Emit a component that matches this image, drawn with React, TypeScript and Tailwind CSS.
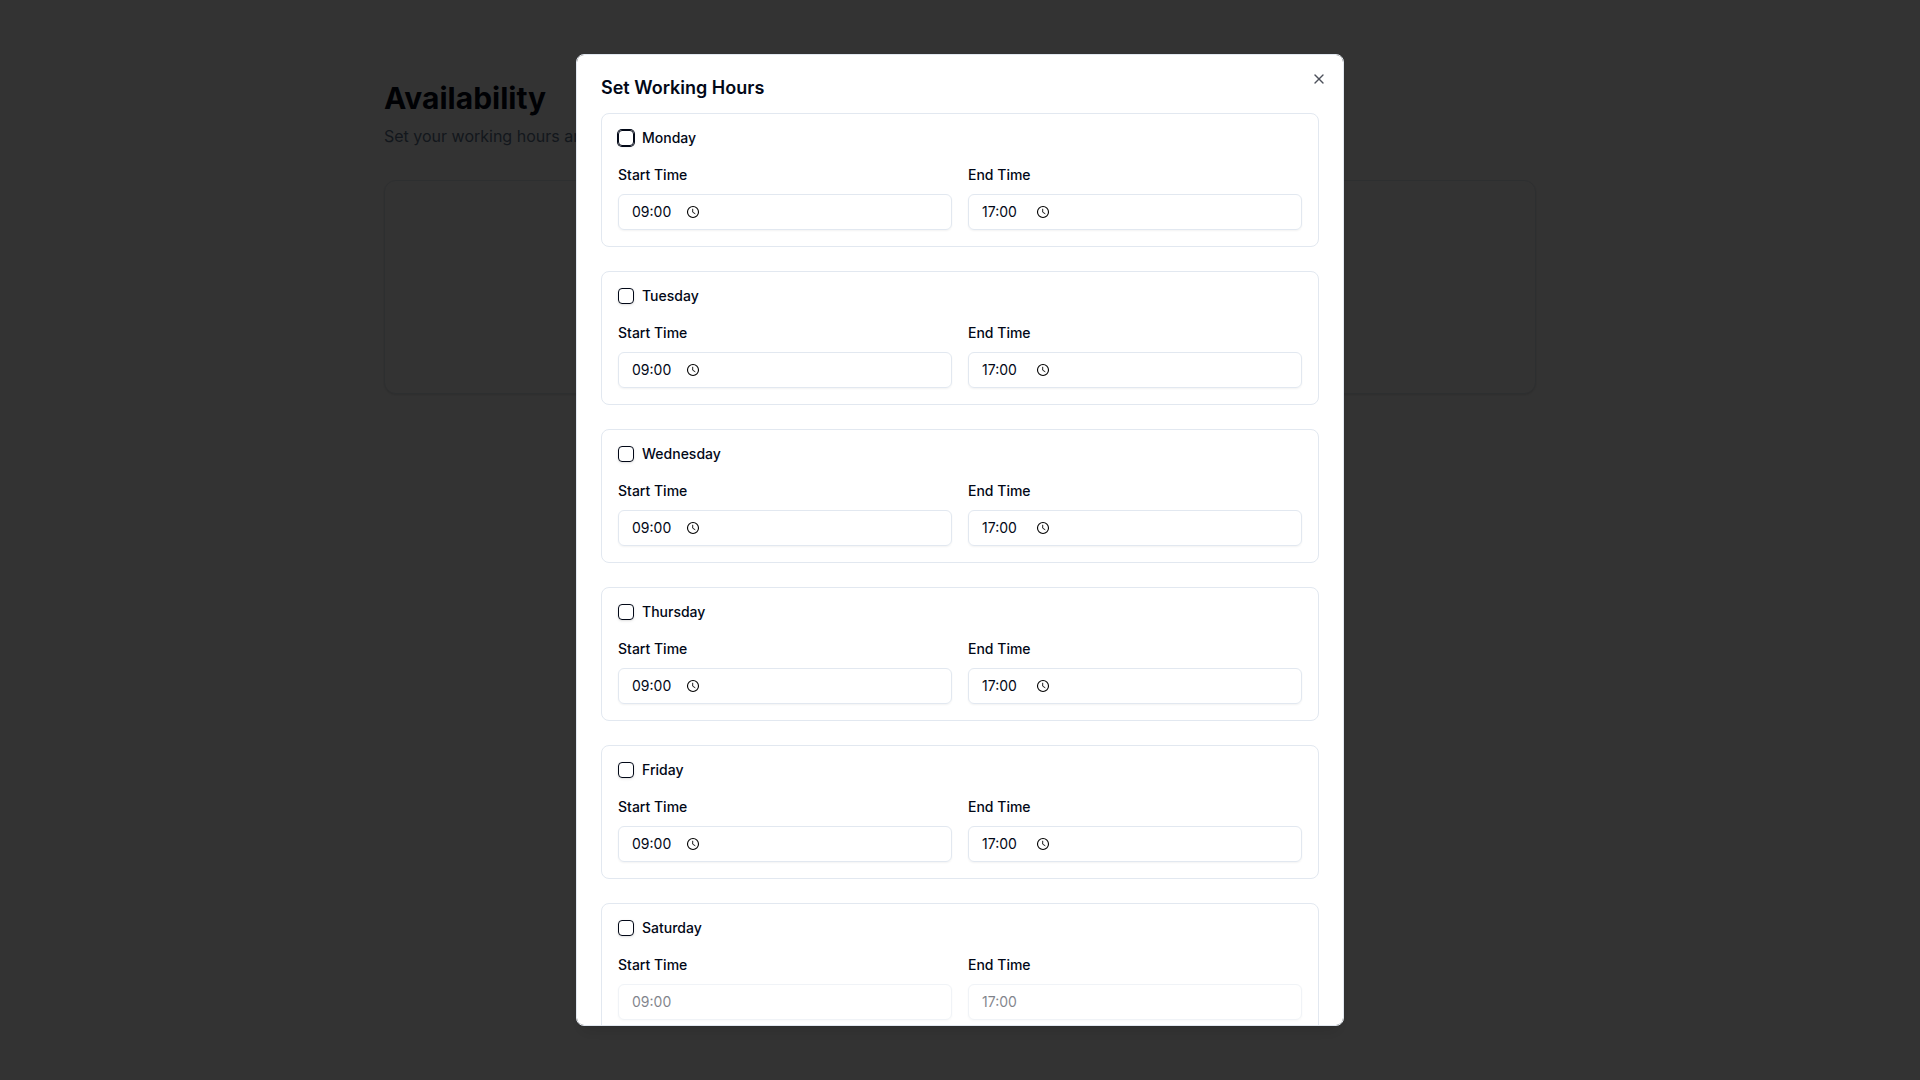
import { useState } from "react";
import { X } from "lucide-react";

type Day = { name: string; locked: boolean };

const days: Day[] = [
  { name: "Monday", locked: false },
  { name: "Tuesday", locked: false },
  { name: "Wednesday", locked: false },
  { name: "Thursday", locked: false },
  { name: "Friday", locked: false },
  { name: "Saturday", locked: true },
];

function ClockIcon() {
  return (
    <svg viewBox="0 0 14 14" className="size-3.5" fill="none" stroke="currentColor" aria-hidden="true">
      <circle cx="7" cy="7" r="5.5" strokeWidth="1.1" />
      <path d="M6.7 3.8V7.2L9.3 8.8" strokeWidth="0.9" />
    </svg>
  );
}

function TimeField({ id, label, initial, disabled }: { id: string; label: string; initial: string; disabled: boolean }) {
  const [value, setValue] = useState(initial);
  return (
    <div className="flex flex-col gap-2">
      <div>
        <label htmlFor={id} className="text-sm leading-none font-medium">
          {label}
        </label>
      </div>
      <div
        className={`flex h-9 items-center rounded-md border border-slate-200 px-3 text-sm shadow-xs ${disabled ? "opacity-50" : ""}`}
      >
        <input
          id={id}
          type="text"
          inputMode="numeric"
          value={value}
          onChange={(e) => setValue(e.target.value)}
          disabled={disabled}
          className="w-[55px] bg-transparent pl-px outline-none"
        />
        {!disabled && (
          <button type="button" aria-label={`Pick ${label.toLowerCase()}`} className="text-black">
            <ClockIcon />
          </button>
        )}
      </div>
    </div>
  );
}

function DayCard({ day, focused }: { day: Day; focused: boolean }) {
  const id = day.name.toLowerCase();
  return (
    <section className="flex flex-col gap-4 rounded-lg border border-slate-200 p-4">
      <div className="flex items-center gap-2">
        <input
          id={id}
          type="checkbox"
          autoFocus={focused}
          className="size-4 shrink-0 appearance-none rounded-sm border border-[#020817] shadow-sm outline-none checked:bg-slate-900 focus:ring-1 focus:ring-[#020817]"
        />
        <label htmlFor={id} className="text-sm leading-4 font-medium">
          {day.name}
        </label>
      </div>
      <div className="grid grid-cols-2 gap-4">
        <TimeField id={`${id}-start`} label="Start Time" initial="09:00" disabled={day.locked} />
        <TimeField id={`${id}-end`} label="End Time" initial="17:00" disabled={day.locked} />
      </div>
    </section>
  );
}

export default function App() {
  return (
    <div className="min-h-screen bg-white font-['Inter',sans-serif] text-[#020817]">
      <main className="mx-auto max-w-6xl pt-20">
        <h1 className="text-3xl font-bold">Availability</h1>
        <p className="mt-2 text-base text-slate-500">Set your working hours and availability</p>
        <div className="mt-8 h-[214px] rounded-xl border border-slate-200 bg-white shadow-sm" />
      </main>

      <div className="fixed inset-0 flex items-center justify-center bg-black/80">
        <div
          role="dialog"
          aria-modal="true"
          aria-labelledby="dialog-title"
          className="relative flex max-h-[90vh] w-full max-w-3xl flex-col gap-4 overflow-y-auto rounded-lg border border-slate-200 bg-white p-6 shadow-lg [scrollbar-width:none]"
        >
          <h2 id="dialog-title" className="text-lg leading-[18px] font-semibold">
            Set Working Hours
          </h2>
          <div className="flex flex-col gap-6">
            {days.map((day, i) => (
              <DayCard key={day.name} day={day} focused={i === 0} />
            ))}
          </div>
          <button type="button" aria-label="Close" className="absolute top-4 right-4 rounded-sm opacity-70 hover:opacity-100">
            <X className="size-4" />
          </button>
        </div>
      </div>
    </div>
  );
}
